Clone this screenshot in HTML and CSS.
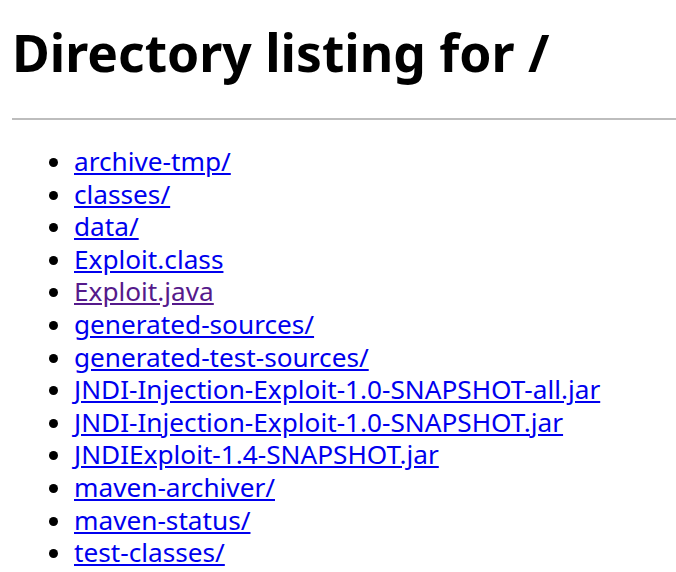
FILE: index.html
```html
<!DOCTYPE html>
<html>
<head>
<meta charset="utf-8">
<title>Directory listing for /</title>
<link rel="stylesheet" href="styles.css">
</head>
<body>
<h1 class="title">Directory listing for /</h1>
<hr class="rule">
<ul class="listing">
<li><a href="archive-tmp/">archive-tmp/</a></li>
<li><a href="classes/">classes/</a></li>
<li><a href="data/">data/</a></li>
<li><a href="Exploit.class">Exploit.class</a></li>
<li><a class="visited" href="Exploit.java">Exploit.java</a></li>
<li><a href="generated-sources/">generated-sources/</a></li>
<li><a href="generated-test-sources/">generated-test-sources/</a></li>
<li><a href="JNDI-Injection-Exploit-1.0-SNAPSHOT-all.jar">JNDI-Injection-Exploit-1.0-SNAPSHOT-all.jar</a></li>
<li><a href="JNDI-Injection-Exploit-1.0-SNAPSHOT.jar">JNDI-Injection-Exploit-1.0-SNAPSHOT.jar</a></li>
<li><a href="JNDIExploit-1.4-SNAPSHOT.jar">JNDIExploit-1.4-SNAPSHOT.jar</a></li>
<li><a href="maven-archiver/">maven-archiver/</a></li>
<li><a href="maven-status/">maven-status/</a></li>
<li><a href="test-classes/">test-classes/</a></li>
</ul>
</body>
</html>
```
FILE: styles.css
```css
html {
  background: #fff;
  overflow: hidden;
}
body {
  margin: 0 0 0 12px;
  font-family: "Noto Sans", "Open Sans", sans-serif;
  font-size: 26.2px;
  color: #000;
}
.title {
  font-size: 51.6px;
  font-weight: bold;
  line-height: 64px;
  margin: 20px 0 34px;
}
.rule {
  display: block;
  width: auto;
  height: 0;
  margin: 0;
  border: 0;
  border-top: 2px solid #bdbdbd;
}
.listing {
  margin: 25px 0 0;
  padding-left: 62px;
  line-height: 32.6px;
}
.listing a {
  color: #0000ee;
}
.listing a.visited {
  color: #551a8b;
}
```
